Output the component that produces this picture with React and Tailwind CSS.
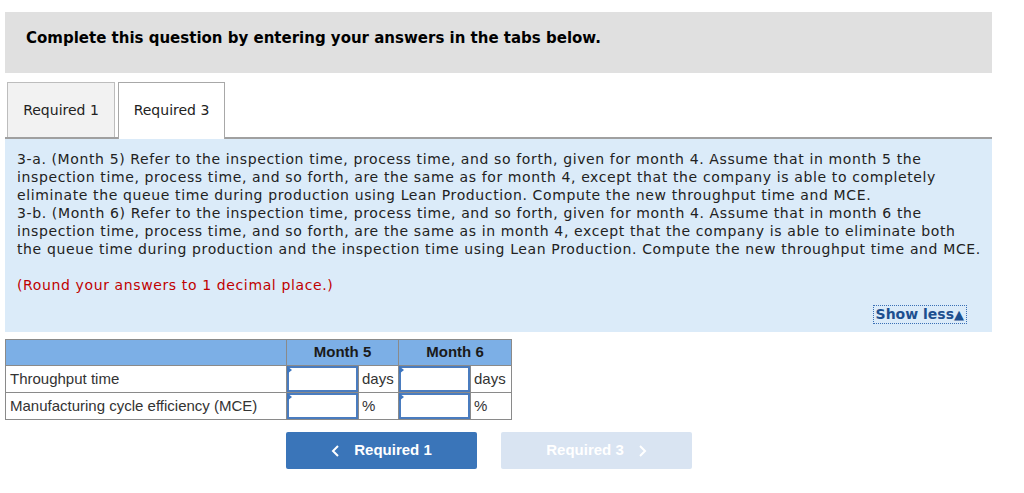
import React from 'react';

const verdana = { fontFamily: '"DejaVu Sans", Verdana, sans-serif' };

const questionLines = [
    '3-a. (Month 5) Refer to the inspection time, process time, and so forth, given for month 4. Assume that in month 5 the',
    'inspection time, process time, and so forth, are the same as for month 4, except that the company is able to completely',
    'eliminate the queue time during production using Lean Production. Compute the new throughput time and MCE.',
    '3-b. (Month 6) Refer to the inspection time, process time, and so forth, given for month 4. Assume that in month 6 the',
    'inspection time, process time, and so forth, are the same as in month 4, except that the company is able to eliminate both',
    'the queue time during production and the inspection time using Lean Production. Compute the new throughput time and MCE.',
];

const AnswerInput = () => (
    <div className="relative h-[26px] w-[71px] border-2 border-[#4a7cbf] bg-white">
        <span className="absolute left-[-2px] top-[-2px] h-0 w-0 border-y-[4px] border-l-[5px] border-y-transparent border-l-[#3d76c0]" />
    </div>
);

const App = () => {
    return (
        <div className="h-[493px] w-[1024px] bg-white pt-3 text-[#222]">
            <div className="ml-[5px] h-[61px] w-[987px] bg-[#e0e0e0] pl-[21px] pt-[14px]" style={verdana}>
                <span className="text-[15px] font-bold text-black">Complete this question by entering your answers in the tabs below.</span>
            </div>

            <div className="ml-[5px] mt-[7px] flex w-[987px] items-end border-b-2 border-[#a0a0a0]" style={verdana}>
                <div className="ml-[2px] flex h-[55px] w-[108px] items-center justify-center border border-b-0 border-[#bdbdbd] bg-[#f2f2f2] text-[14px] text-[#222]">
                    Required 1
                </div>
                <div className="relative top-[2px] ml-[3px] flex h-[57px] w-[107px] items-center justify-center border border-b-0 border-[#a8a8a8] bg-white pb-[2px] text-[14px] text-[#222]">
                    Required 3
                </div>
            </div>

            <div className="ml-[5px] h-[193px] w-[987px] bg-[#dbebf9] px-3 pt-[11px]" style={verdana}>
                <div className="text-[14px] leading-[18px] tracking-[0.62px] whitespace-nowrap text-[#222]">
                    {questionLines.map(line => (
                        <div key={line}>{line}</div>
                    ))}
                </div>
                <p className="mt-[18px] text-[14px] leading-[18px] tracking-[0.62px] text-[#c00000]">(Round your answers to 1 decimal place.)</p>
                <div className="mt-[11px] flex justify-end pr-[13px]">
                    <span className="border border-dotted border-[#3a6fb5] px-[2px] text-[14px] font-bold leading-[16px] text-[#1d4f8f]">
                        Show less<span className="text-[13px]">▲</span>
                    </span>
                </div>
            </div>

            <table className="ml-[5px] mt-[7px] border-collapse text-[15px]" style={{ fontFamily: '"Liberation Sans", Arial, sans-serif' }}>
                <thead>
                    <tr className="h-[26px] bg-[#7cafe6]">
                        <th className="w-[281px] border border-[#8a8a8a]"></th>
                        <th colSpan={2} className="w-[112px] border border-[#8a8a8a] font-bold text-[#1a1a1a]">Month 5</th>
                        <th colSpan={2} className="w-[112px] border border-[#8a8a8a] font-bold text-[#1a1a1a]">Month 6</th>
                    </tr>
                </thead>
                <tbody>
                    {[
                        ['Throughput time', 'days'],
                        ['Manufacturing cycle efficiency (MCE)', '%'],
                    ].map(([label, unit]) => (
                        <tr key={label} className="h-[27px]">
                            <td className="border border-[#8a8a8a] pl-[4px] text-[#333]">{label}</td>
                            <td className="w-[71px] border border-[#8a8a8a] p-0"><AnswerInput /></td>
                            <td className="w-[40px] border border-l-0 border-[#8a8a8a] pl-[3px] text-[#333]">{unit}</td>
                            <td className="w-[71px] border border-[#8a8a8a] p-0"><AnswerInput /></td>
                            <td className="w-[41px] border border-l-0 border-[#8a8a8a] pl-[3px] text-[#333]">{unit}</td>
                        </tr>
                    ))}
                </tbody>
            </table>

            <div className="ml-[286px] mt-[12px] flex gap-[24px]" style={{ fontFamily: '"Liberation Sans", Arial, sans-serif' }}>
                <button className="flex h-[37px] w-[191px] items-center justify-center gap-[14px] rounded-[2px] bg-[#3a75b9] text-[15px] font-bold text-white">
                    <svg width="9" height="14" viewBox="0 0 9 14"><path d="M7 2 L2 7 L7 12" fill="none" stroke="white" strokeWidth="2" /></svg>
                    Required 1
                </button>
                <button className="flex h-[37px] w-[191px] items-center justify-center gap-[14px] rounded-[2px] bg-[#d9e4f2] text-[15px] font-bold text-white">
                    Required 3
                    <svg width="9" height="14" viewBox="0 0 9 14"><path d="M2 2 L7 7 L2 12" fill="none" stroke="white" strokeWidth="2" /></svg>
                </button>
            </div>
        </div>
    );
};

export default App;
